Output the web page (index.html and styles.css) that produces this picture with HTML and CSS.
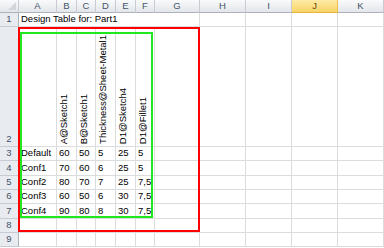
FILE: index.html
```html
<!DOCTYPE html>
<html lang="en">
<head>
    <meta charset="UTF-8">
    <title>Design Table - Part1</title>
    <link rel="stylesheet" href="styles.css">
</head>
<body>

    <div class="sheet">
        <div class="row head">
            <div class="hd corner"></div>
            <div class="hd">A</div>
            <div class="hd">B</div>
            <div class="hd">C</div>
            <div class="hd">D</div>
            <div class="hd">E</div>
            <div class="hd">F</div>
            <div class="hd">G</div>
            <div class="hd">H</div>
            <div class="hd">I</div>
            <div class="hd active">J</div>
            <div class="hd">K</div>
        </div>

        <div class="row r14">
            <div class="rh">1</div>
            <div class="cell title">Design Table for: Part1</div>
            <div class="cell"></div><div class="cell"></div><div class="cell"></div><div class="cell"></div>
        </div>

        <div class="row tall">
            <div class="rh">2</div>
            <div class="cell"></div>
            <div class="cell vt"><span>A@Sketch1</span></div>
            <div class="cell vt"><span>B@Sketch1</span></div>
            <div class="cell vt"><span>Thickness@Sheet-Metal1</span></div>
            <div class="cell vt"><span>D1@Sketch4</span></div>
            <div class="cell vt"><span>D1@Fillet1</span></div>
            <div class="cell"></div><div class="cell"></div><div class="cell"></div><div class="cell"></div><div class="cell"></div>
        </div>

        <div class="row r14">
            <div class="rh">3</div>
            <div class="cell">Default</div><div class="cell">60</div><div class="cell">50</div><div class="cell">5</div><div class="cell">25</div><div class="cell">5</div>
            <div class="cell"></div><div class="cell"></div><div class="cell"></div><div class="cell"></div><div class="cell"></div>
        </div>

        <div class="row r15">
            <div class="rh">4</div>
            <div class="cell">Conf1</div><div class="cell">70</div><div class="cell">60</div><div class="cell">6</div><div class="cell">25</div><div class="cell">5</div>
            <div class="cell"></div><div class="cell"></div><div class="cell"></div><div class="cell"></div><div class="cell"></div>
        </div>

        <div class="row r14">
            <div class="rh">5</div>
            <div class="cell">Conf2</div><div class="cell">80</div><div class="cell">70</div><div class="cell">7</div><div class="cell">25</div><div class="cell">7,5</div>
            <div class="cell"></div><div class="cell"></div><div class="cell"></div><div class="cell"></div><div class="cell"></div>
        </div>

        <div class="row r14">
            <div class="rh">6</div>
            <div class="cell">Conf3</div><div class="cell">60</div><div class="cell">50</div><div class="cell">6</div><div class="cell">30</div><div class="cell">7,5</div>
            <div class="cell"></div><div class="cell"></div><div class="cell"></div><div class="cell"></div><div class="cell"></div>
        </div>

        <div class="row r15">
            <div class="rh">7</div>
            <div class="cell">Conf4</div><div class="cell">90</div><div class="cell">80</div><div class="cell">8</div><div class="cell">30</div><div class="cell">7,5</div>
            <div class="cell"></div><div class="cell"></div><div class="cell"></div><div class="cell"></div><div class="cell"></div>
        </div>

        <div class="row r14">
            <div class="rh">8</div>
            <div class="cell"></div><div class="cell"></div><div class="cell"></div><div class="cell"></div><div class="cell"></div><div class="cell"></div>
            <div class="cell"></div><div class="cell"></div><div class="cell"></div><div class="cell"></div><div class="cell"></div>
        </div>

        <div class="row r14">
            <div class="rh">9</div>
            <div class="cell"></div><div class="cell"></div><div class="cell"></div><div class="cell"></div><div class="cell"></div><div class="cell"></div>
            <div class="cell"></div><div class="cell"></div><div class="cell"></div><div class="cell"></div><div class="cell"></div>
        </div>

        <!-- range outlines drawn over the grid -->
        <div class="range red"></div>
        <div class="range green"></div>
    </div>

</body>
</html>
```

FILE: styles.css
```css
* {
    margin: 0;
    padding: 0;
    box-sizing: border-box;
}

body {
    width: 384px;
    height: 248px;
    overflow: hidden;
    background: white;
    font-family: "Liberation Sans", Arial, sans-serif;
    font-size: 9.5px;
}

.sheet {
    position: relative;
    width: 384px;
}

.row {
    display: grid;
    grid-template-columns: 19px 38px 20px 19px 20px 20px 19px 45px 46px 46px 46px 46px;
}

.head { height: 13px; }
.r14 { height: 14px; }
.r15 { height: 15px; }
.tall { height: 120px; }

.hd {
    background: linear-gradient(#f9fafb, #e3e6ea);
    border-right: 1px solid #c8ccd2;
    border-bottom: 1px solid #aeb3ba;
    color: #44536a;
    text-align: center;
    line-height: 12px;
}

.hd.corner {
    position: relative;
}

.hd.corner::after {
    content: "";
    position: absolute;
    right: 2px;
    bottom: 2px;
    border-left: 8px solid transparent;
    border-bottom: 8px solid #d2d5da;
}

.hd.active {
    background: linear-gradient(#fdeaa6, #f8d468);
    border-right-color: #f0c14c;
    border-bottom-color: #e9b53c;
    color: #6a4b12;
}

.rh {
    background: #e8ebef;
    border-right: 1px solid #aeb3ba;
    border-bottom: 1px solid #c8ccd2;
    color: #44536a;
    text-align: center;
    display: flex;
    align-items: flex-end;
    justify-content: center;
    padding-bottom: 1px;
    line-height: 12px;
}

.cell {
    border-right: 1px solid #dadcdd;
    border-bottom: 1px solid #dadcdd;
    color: black;
    white-space: nowrap;
    display: flex;
    align-items: flex-end;
    padding: 0 0 1px 2px;
    line-height: 12px;
}

.title {
    grid-column: span 7;
}

.vt {
    padding: 0 0 2px 1px;
}

.vt span {
    writing-mode: vertical-rl;
    transform: rotate(180deg);
    line-height: 12px;
}

.range {
    position: absolute;
    border: 2px solid;
}

.red {
    border-color: #ff0000;
    left: 18px;
    top: 27px;
    width: 182px;
    height: 205px;
}

.green {
    border-color: #1ee81e;
    left: 20px;
    top: 32px;
    width: 133px;
    height: 186px;
}
```
